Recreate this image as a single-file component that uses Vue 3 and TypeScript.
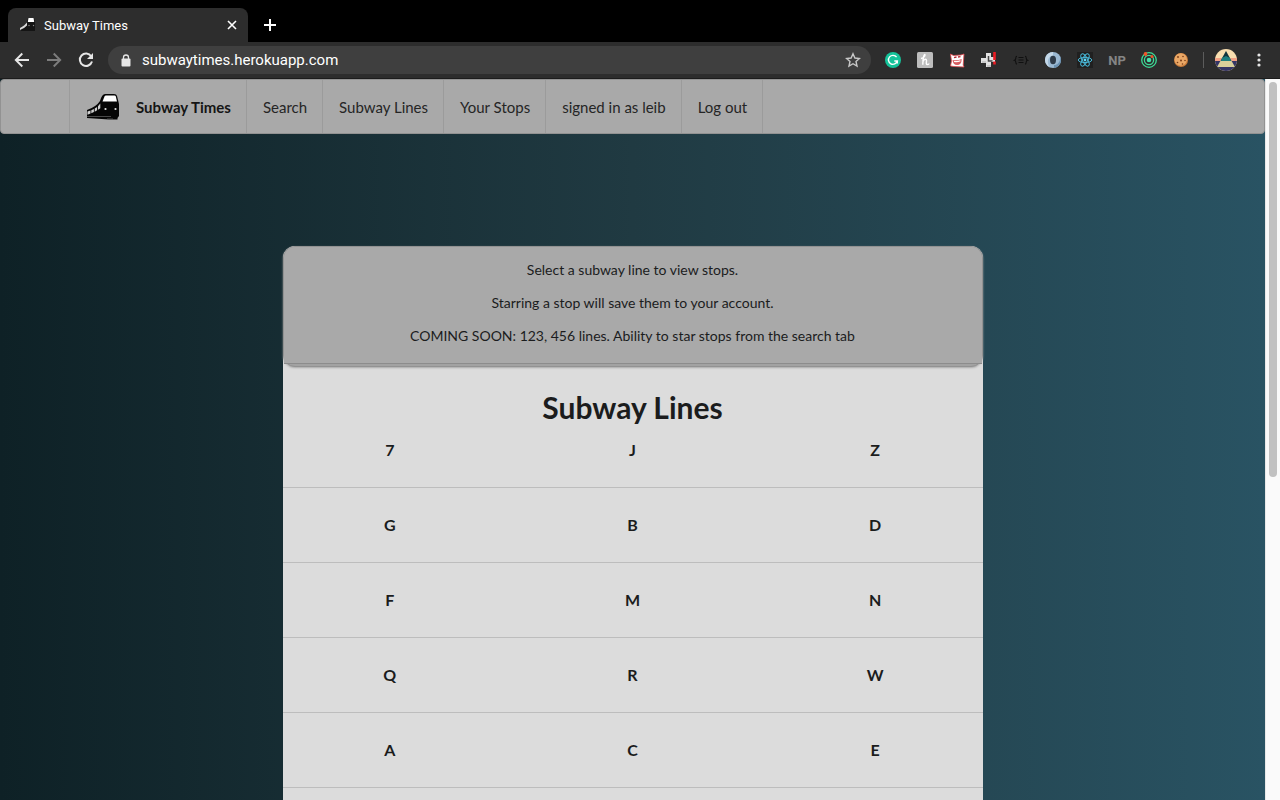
<script setup lang="ts">
interface NavItem {
  label: string
  slug: string
}

const navItems: NavItem[] = [
  { label: 'Search', slug: 'search' },
  { label: 'Subway Lines', slug: 'lines' },
  { label: 'Your Stops', slug: 'stops' },
  { label: 'signed in as leib', slug: 'account' },
  { label: 'Log out', slug: 'logout' },
]

const notes: string[] = [
  'Select a subway line to view stops.',
  'Starring a stop will save them to your account.',
  'COMING SOON: 123, 456 lines. Ability to star stops from the search tab',
]

const rows: string[][] = [
  ['7', 'J', 'Z'],
  ['G', 'B', 'D'],
  ['F', 'M', 'N'],
  ['Q', 'R', 'W'],
  ['A', 'C', 'E'],
]
</script>

<template>
  <div class="browser">
    <div class="tab-strip">
      <div class="tab">
        <svg class="favicon" width="16" height="16" viewBox="0 0 16 16" aria-hidden="true">
          <path d="M7 5.500L8 1h6l1 4v9H1v-4l5-2z" fill="#141414" />
          <path d="M8.500 1h5l.7 4H7.800z" fill="#fff" />
          <path d="M0 11l4-2.500 3-3v3L4 11l-4 2z" fill="#d8d8d8" />
          <circle cx="9" cy="8.500" r=".7" fill="#888" /><circle cx="13.500" cy="8.500" r=".7" fill="#888" />
        </svg>
        <span class="tab-title">Subway Times</span>
        <button class="icon-btn tab-close" aria-label="Close tab">
          <svg width="10" height="10" viewBox="0 0 10 10"><path d="M1 1l8 8M9 1l-8 8" stroke="#fff" stroke-width="1.6" /></svg>
        </button>
      </div>
      <button class="icon-btn new-tab" aria-label="New tab">
        <svg width="12" height="12" viewBox="0 0 12 12"><path d="M6 0v12M0 6h12" stroke="#fff" stroke-width="2" /></svg>
      </button>
    </div>

    <div class="toolbar">
      <button class="icon-btn tool" aria-label="Back">
        <svg width="16" height="16" viewBox="0 0 16 16" fill="none" stroke="#e6e6e6" stroke-width="1.9"><path d="M15 8H2M8.300 1.500L1.800 8l6.500 6.500" /></svg>
      </button>
      <button class="icon-btn tool" aria-label="Forward">
        <svg width="16" height="16" viewBox="0 0 16 16" fill="none" stroke="#7d7d7d" stroke-width="1.900"><path d="M1 8h13M7.700 1.500L14.200 8l-6.500 6.500" /></svg>
      </button>
      <button class="icon-btn tool" aria-label="Reload">
        <svg width="16" height="16" viewBox="0 0 16 16"><path d="M13.200 4.200A6.200 6.200 0 1 0 14 9.500" fill="none" stroke="#e6e6e6" stroke-width="2" /><path d="M15 1v6H9z" fill="#e6e6e6" /></svg>
      </button>
      <div class="omnibox">
        <svg class="lock" width="10" height="13" viewBox="0 0 10 13"><rect x="0.500" y="4.500" width="9" height="8" rx="1" fill="#e6e6e6" /><path d="M2.500 5V3.500a2.500 2.500 0 0 1 5 0V5" fill="none" stroke="#e6e6e6" stroke-width="1.300" /></svg>
        <input class="url" type="text" aria-label="Address" value="subwaytimes.herokuapp.com" />
        <button class="icon-btn" aria-label="Bookmark">
          <svg width="16" height="16" viewBox="0 0 16 16"><path d="M8 1.800l1.900 4.200 4.500.5-3.400 3 1 4.500L8 11.700 4 14l1-4.500-3.400-3 4.500-.5z" fill="none" stroke="#c8c8c8" stroke-width="1.400" /></svg>
        </button>
      </div>
      <div class="extensions">
        <button class="icon-btn" aria-label="Grammar">
          <svg width="16" height="16" viewBox="0 0 16 16"><circle cx="8" cy="8" r="8" fill="#15c39a" /><path d="M11.600 5.200A4.500 4.500 0 1 0 12.300 9H9.300M12.300 8.500v3" fill="none" stroke="#fff" stroke-width="1.400" /></svg>
        </button>
        <button class="icon-btn" aria-label="Coupons">
          <svg width="16" height="16" viewBox="0 0 16 16"><rect width="16" height="16" rx="1.500" fill="#bdbdbd" /><path d="M4 6.500C6 6 8.500 4 8 2.800S5.800 4.500 5.800 12.800M5.800 10C6.500 7.500 9.500 6 9.500 8.500c0 2-.8 4 .8 4S12 11.500 12 11.500" fill="none" stroke="#fff" stroke-width="1.400" /></svg>
        </button>
        <button class="icon-btn" aria-label="Comics">
          <svg width="16" height="16" viewBox="0 0 16 16"><path d="M1.500 2l3 1.500L12 3l3-1-.8 11 .8 2-10-.5-3.500-.5L2.500 9z" fill="#fff" stroke="#e2474d" stroke-width=".8" /><path d="M5 5.600l2.500-.6M9 5l2.500-.4" stroke="#b52632" stroke-width="1.400" /><path d="M3.500 8q4.500 1 9.200-1-.2 6-4.500 6T3.500 8z" fill="#d85c60" /><path d="M5 9.500q3.500.5 6.500-.7" fill="none" stroke="#fff" stroke-width="1.100" /></svg>
        </button>
        <button class="icon-btn" aria-label="Page checker">
          <svg width="16" height="16" viewBox="0 0 16 16"><path d="M5 1h5v4h4v5h-4v5H5v-4H0V6h5z" fill="#e2e2e2" /><path d="M7.500 4v5h4" fill="none" stroke="#444" stroke-width="1.500" /><path d="M1 10h4M6 14h4" stroke="#aaa" /><path d="M13.500 0v8M13.500 9.500v3" stroke="#ed1c24" stroke-width="2.600" /></svg>
        </button>
        <button class="icon-btn" aria-label="JSON tools">
          <svg width="16" height="16" viewBox="0 0 16 16" fill="none" stroke="#101010" stroke-width="1.100"><path d="M4 4.300Q2.800 4.300 2.800 6T1.500 8.200q1.300.3 1.300 2T4 12.100M12 4.300q1.200 0 1.200 1.700t1.300 2.200q-1.300.3-1.300 2T12 12.100M5.500 5.500h5M5.500 8h5M5.500 10.500h5" /></svg>
        </button>
        <button class="icon-btn" aria-label="JSON viewer">
          <svg width="16" height="16" viewBox="0 0 16 16"><circle cx="8" cy="8" r="8" fill="#9bb9d3" /><path d="M8 0a8 8 0 0 0-3 15.400C1 11 3 4 8 3.500z" fill="#c4d8e8" /><path d="M9 15.900A8 8 0 0 0 15 4c1 5-2 9-6 9z" fill="#6b92b3" /><ellipse cx="8" cy="8" rx="3" ry="4.200" fill="#2d3a48" /></svg>
        </button>
        <button class="icon-btn" aria-label="React tools">
          <svg width="16" height="16" viewBox="0 0 16 16"><rect width="16" height="16" fill="#202020" /><g fill="none" stroke="#48b8d8" stroke-width="1"><ellipse cx="8" cy="8" rx="6.800" ry="2.600" /><ellipse cx="8" cy="8" rx="6.800" ry="2.600" transform="rotate(60 8 8)" /><ellipse cx="8" cy="8" rx="6.800" ry="2.600" transform="rotate(120 8 8)" /></g><circle cx="8" cy="8" r="1.400" fill="#61dafb" /></svg>
        </button>
        <button class="icon-btn np">NP</button>
        <button class="icon-btn" aria-label="Orbit">
          <svg width="16" height="16" viewBox="0 0 16 16"><g fill="none" stroke="#3ddc97" stroke-width="1.300"><circle cx="8" cy="8" r="7.300" /><circle cx="8" cy="8" r="4.600" /></g><circle cx="8" cy="8" r="2.300" fill="#45e0a8" /><circle cx="4.500" cy="2" r="1.900" fill="#f0552b" /><circle cx="11" cy="4.500" r="1.500" fill="#f0552b" /></svg>
        </button>
        <button class="icon-btn" aria-label="Cookies">
          <svg width="16" height="16" viewBox="0 0 16 16"><circle cx="8" cy="8" r="7" fill="#c97a38" /><circle cx="7.700" cy="7.500" r="6.200" fill="#e9a766" /><g fill="#7a3d17"><circle cx="5" cy="5" r=".9" /><circle cx="10" cy="4.500" r=".8" /><circle cx="8" cy="8.500" r="1" /><circle cx="12" cy="8.500" r=".8" /><circle cx="4.500" cy="10.500" r=".8" /><circle cx="9.500" cy="12" r=".8" /></g></svg>
        </button>
      </div>
      <span class="divider"></span>
      <button class="icon-btn avatar" aria-label="Profile">
        <svg width="22" height="22" viewBox="0 0 22 22"><defs><clipPath id="avatar-clip"><circle cx="11" cy="11" r="11" /></clipPath></defs><g clip-path="url(#avatar-clip)"><rect width="22" height="22" fill="#f9dfb0" /><rect y="9" width="22" height="4" fill="#f2a184" /><rect y="12" width="22" height="10" fill="#343565" /><path d="M11 2l9 16H2z" fill="#d8cf9b" /><path d="M11 2l5.500 10h-11z" fill="#12343d" /><path d="M7 9l4-2 4 2 1 3H6z" fill="#1e7f80" /></g></svg>
      </button>
      <button class="icon-btn menu" aria-label="Menu">
        <svg width="4" height="14" viewBox="0 0 4 14" fill="#e6e6e6"><circle cx="2" cy="2" r="1.600" /><circle cx="2" cy="7" r="1.600" /><circle cx="2" cy="12" r="1.600" /></svg>
      </button>
    </div>

    <div class="viewport">
      <div class="page">
        <nav class="site-nav">
          <a class="nav-item brand" href="#home">
            <svg class="train" width="34" height="28" viewBox="0 0 34 28" aria-hidden="true">
              <path d="M1 17Q10 14 14 8Q16 1 19 1h9q2.500 0 3 2l2 8v12l-1.500 2v1.500H23L1 25z" fill="#050505" />
              <path d="M19.500 2.500h9q1 0 1.300 1L31 8.500H16.500l2-5z" fill="#fff" />
              <path d="M1.500 18.500l3-1v3l-3 1.200zM5.300 17.200l2.600-1.200v3l-2.600 1.200zM8.700 15.500l2.400-1.500v3.300l-2.400 1.400zM12 13.200l2.300-2.700v4.700L12 16.700z" fill="#d0d0d0" />
              <circle cx="19.500" cy="16" r="1.100" fill="#e5e5e5" /><circle cx="29.500" cy="16" r="1.100" fill="#e5e5e5" />
              <path d="M1 23.500h24M21 26h6" stroke="#666" stroke-width=".7" />
            </svg>
            <span>Subway Times</span>
          </a>
          <a v-for="item in navItems" :key="item.slug" class="nav-item" :href="'#' + item.slug">{{ item.label }}</a>
        </nav>

        <main class="content">
          <section class="notice">
            <div class="notice-body">
              <p v-for="note in notes" :key="note">{{ note }}</p>
            </div>
          </section>
          <section class="lines">
            <h1>Subway Lines</h1>
            <div v-for="row in rows" :key="row[0]" class="line-row">
              <a v-for="line in row" :key="line" class="line" :href="'#line-' + line">{{ line }}</a>
            </div>
          </section>
        </main>
      </div>
      <div class="scrollbar"><div class="thumb"></div></div>
    </div>
  </div>
</template>

<style>
body {
  overflow: hidden;
}
</style>

<style scoped>
.browser,
.browser * {
  box-sizing: border-box;
}
.browser {
  display: flex;
  flex-direction: column;
  height: 100vh;
  background: #000;
  font-family: Roboto, "Liberation Sans", sans-serif;
}
.icon-btn {
  display: flex;
  align-items: center;
  justify-content: center;
  flex: none;
  margin: 0;
  padding: 0;
  border: 0;
  background: none;
}
.tab-strip {
  display: flex;
  flex: none;
  height: 42px;
  padding: 8px 8px 0;
}
.tab {
  display: flex;
  align-items: center;
  width: 240px;
  padding: 0 11px 0 12px;
  border-radius: 8px 8px 0 0;
  background: #2d2d2d;
  color: #fff;
}
.favicon {
  margin-right: 8px;
}
.tab-title {
  flex: 1;
  font-size: 13px;
}
.new-tab {
  width: 44px;
}
.toolbar {
  display: flex;
  align-items: center;
  flex: none;
  height: 37px;
  padding: 0 13px 0 14px;
  border-bottom: 1px solid #1c1c1c;
  background: #2d2d2d;
}
.tool {
  width: 16px;
  margin-right: 16px;
}
.omnibox {
  display: flex;
  align-items: center;
  flex: 1;
  height: 28px;
  margin-left: -2px;
  padding: 0 10px 0 13px;
  border-radius: 14px;
  background: #3f3f3f;
}
.url {
  flex: 1;
  min-width: 0;
  margin-left: 11px;
  padding: 0;
  border: 0;
  outline: 0;
  background: none;
  color: #fff;
  font: 15px Roboto, "Liberation Sans", sans-serif;
}
.extensions {
  display: flex;
  align-items: center;
  gap: 16px;
  margin-left: 14px;
}
.np {
  width: 16px;
  color: #858585;
  font: 700 13px Roboto, "Liberation Sans", sans-serif;
}
.divider {
  width: 1px;
  height: 16px;
  margin: 0 11px 0 14px;
  background: #5c5c5c;
}
.menu {
  width: 16px;
  margin-left: 14px;
}
.viewport {
  display: flex;
  flex: 1;
  min-height: 0;
}
.page {
  flex: 1;
  min-width: 0;
  overflow: hidden;
  background: linear-gradient(to right, #0e2126, #203a42, #295363);
  color: #1b1c1d;
  font-family: Lato, "Open Sans", sans-serif;
}
.site-nav {
  display: flex;
  height: 55px;
  padding-left: 68px;
  border: 1px solid #929292;
  border-radius: 4px;
  background: #a9a9a9;
}
.nav-item {
  display: flex;
  align-items: center;
  padding: 0 15px 0 16px;
  border-right: 1px solid #9b9b9b;
  color: #252525;
  font-size: 15px;
  text-decoration: none;
  white-space: nowrap;
}
.brand {
  gap: 16px;
  border-left: 1px solid #9b9b9b;
  color: #151515;
  font-weight: 700;
}
.content {
  width: 700px;
  max-width: 100%;
  margin: 112px auto 0;
  border-radius: 12px 12px 0 0;
  background: #dcdcdc;
}
.notice {
  padding-bottom: 2px;
  border: 1px solid #929292;
  border-radius: 12px;
  background: #a2a2a2;
  box-shadow: 0 1px 2px #a8a8a8;
  text-align: center;
}
.notice-body {
  padding: 12px 14px 17px;
  border-bottom: 1px solid #8c8c8c;
  border-radius: 11px 11px 0 0;
  background: #a9a9a9;
}
.notice p {
  margin: 0 0 12px;
  font-size: 14px;
  line-height: 21px;
}
.notice p:last-child {
  margin-bottom: 0;
}
.lines {
  overflow: hidden;
  padding-bottom: 75px;
}
.lines h1 {
  margin: 0;
  padding-top: 22px;
  font-size: 30px;
  font-weight: 700;
  line-height: 36px;
  text-align: center;
}
.line-row {
  display: grid;
  grid-template-columns: repeat(3, 1fr);
  height: 75px;
  margin: 0 -14px;
  padding-top: 27px;
  border-bottom: 1px solid #bdbdbd;
}
.lines h1 + .line-row {
  height: 63px;
  padding-top: 15px;
}
.line {
  color: #1b1c1d;
  font-size: 16px;
  font-weight: 700;
  line-height: 20px;
  text-align: center;
  text-decoration: none;
}
.scrollbar {
  flex: none;
  width: 15px;
  padding: 3px 3px 0;
  border-left: 1px solid #e8e8e8;
  background: #fafafa;
}
.thumb {
  width: 8px;
  height: 55%;
  border-radius: 4px;
  background: #c1c1c1;
}
</style>
